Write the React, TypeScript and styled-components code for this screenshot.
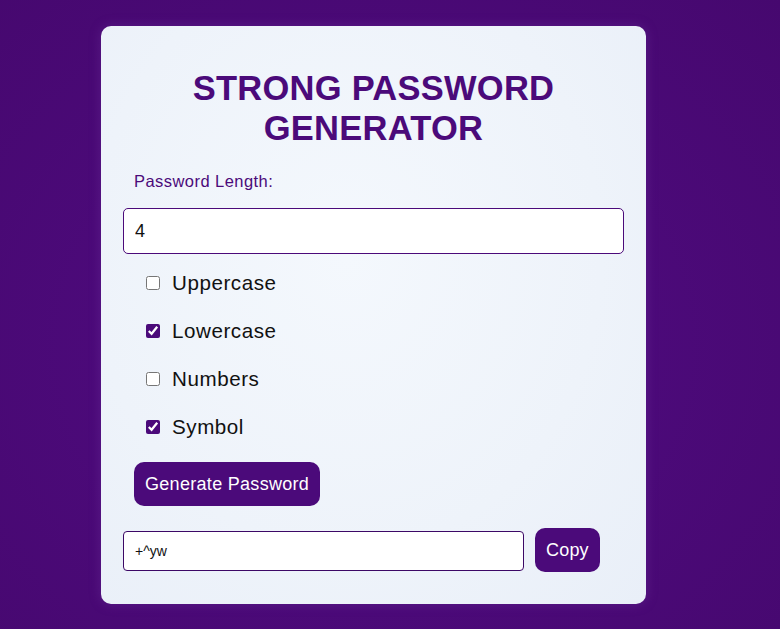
import React, { useState } from 'react';
import styled, { createGlobalStyle } from "styled-components";

const GlobalStyle = createGlobalStyle`
    html, body {
        margin: 0;
        padding: 0;
    }
    body {
        min-height: 100vh;
        font-family: "Liberation Sans", Arial, sans-serif;
        background: radial-gradient(ellipse at 48% 55%, #540c86 0%, #4c0a7a 45%, #46086f 100%);
    }
`;

const Page = styled.div`
    display: flex;
    align-items: flex-start;
    min-height: 100vh;
    padding: 26px 0 0 101px;
    box-sizing: border-box;
`;

const Card = styled.div`
    width: 545px;
    box-sizing: border-box;
    padding: 20px 22px 32px;
    border-radius: 10px;
    background: radial-gradient(ellipse at 45% 40%, #f4f8fd 0%, #eef3fa 60%, #e9eff8 100%);
    box-shadow: 0 0 12px rgba(120, 60, 170, 0.35);
`;

const Title = styled.h1`
    margin: 22px 0 24px;
    text-align: center;
    font-size: 34.5px;
    line-height: 40px;
    letter-spacing: 0.25px;
    font-weight: bold;
    color: #4b0a7a;
`;

const FieldLabel = styled.label`
    display: block;
    margin: 0 0 18px 11px;
    font-size: 16.5px;
    line-height: 18px;
    letter-spacing: 0.45px;
    color: #4b0a7a;
`;

const LengthInput = styled.input`
    display: block;
    width: 100%;
    box-sizing: border-box;
    height: 46px;
    padding: 0 11px;
    font-family: "Liberation Sans", Arial, sans-serif;
    font-size: 18px;
    color: #111;
    background: #fff;
    border: 1px solid #4b0a7a;
    border-radius: 5px;
    outline: none;
`;

const Options = styled.div`
    display: flex;
    flex-direction: column;
    gap: 24px;
    margin: 17px 0 23px 23px;
`;

const OptionRow = styled.label`
    display: flex;
    align-items: center;
    height: 24px;
    font-size: 20.6px;
    letter-spacing: 0.55px;
    color: #111;
`;

const Check = styled.input`
    width: 14px;
    height: 14px;
    margin: 0 12px 0 0;
    accent-color: #4b0a7a;
`;

const Button = styled.button<{ $spacing?: number }>`
    height: 44px;
    padding: 0 11px;
    border: none;
    border-radius: 10px;
    background: #4b0a7a;
    color: #fff;
    font-family: "Liberation Sans", Arial, sans-serif;
    font-size: 18px;
    letter-spacing: ${p => p.$spacing ?? 0}px;
    cursor: pointer;
`;

const GenerateButton = styled(Button)`
    display: block;
    margin-left: 11px;
`;

const OutputRow = styled.div`
    display: flex;
    align-items: center;
    gap: 11px;
    margin-top: 22px;
`;

const OutputInput = styled.input`
    width: 401px;
    height: 40px;
    margin-top: 2px;
    box-sizing: border-box;
    padding: 0 11px;
    font-family: "Liberation Sans", Arial, sans-serif;
    font-size: 14px;
    color: #111;
    background: #fff;
    border: 1px solid #3c0866;
    border-radius: 4px;
    outline: none;
`;

const options = [
    { name: "Uppercase", checked: false },
    { name: "Lowercase", checked: true },
    { name: "Numbers", checked: false },
    { name: "Symbol", checked: true },
];

function App() {
    const [length, setLength] = useState("4");
    const [checks, setChecks] = useState(options.map(o => o.checked));
    const [password, setPassword] = useState("+^yw");

    return (
        <>
            <GlobalStyle />
            <Page>
                <Card>
                    <Title>STRONG PASSWORD GENERATOR</Title>
                    <FieldLabel htmlFor="len">Password Length:</FieldLabel>
                    <LengthInput id="len" value={length} onChange={e => setLength(e.target.value)} />
                    <Options>
                        {options.map((o, i) => (
                            <OptionRow key={o.name}>
                                <Check
                                    type="checkbox"
                                    checked={checks[i]}
                                    onChange={() => setChecks(c => c.map((v, j) => (j === i ? !v : v)))}
                                />
                                {o.name}
                            </OptionRow>
                        ))}
                    </Options>
                    <GenerateButton $spacing={0.3}>Generate Password</GenerateButton>
                    <OutputRow>
                        <OutputInput value={password} onChange={e => setPassword(e.target.value)} />
                        <Button $spacing={0.2}>Copy</Button>
                    </OutputRow>
                </Card>
            </Page>
        </>
    );
}

export default App;
